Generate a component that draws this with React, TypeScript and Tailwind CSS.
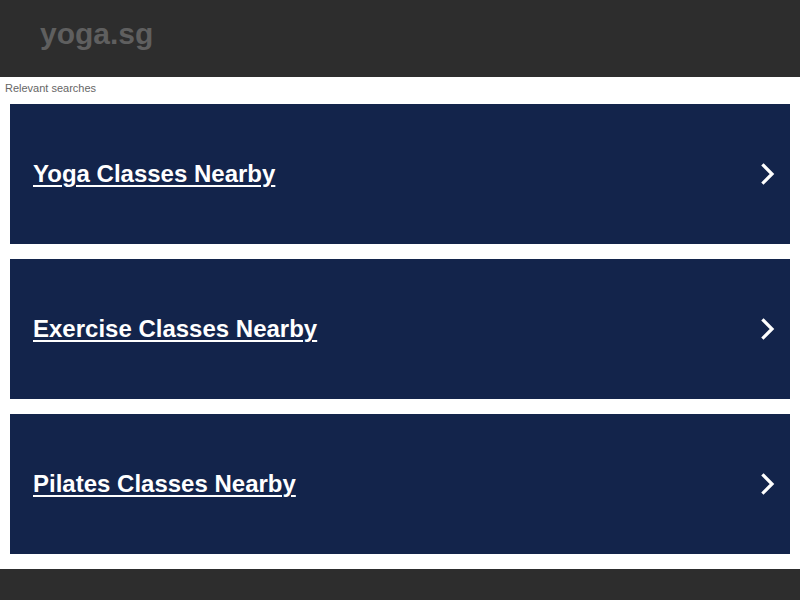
const searches = ["Yoga Classes Nearby", "Exercise Classes Nearby", "Pilates Classes Nearby"];

function Chevron() {
  return (
    <svg width="14" height="22" viewBox="0 0 14 22" className="shrink-0">
      <polyline
        points="2.5,2.5 11,11 2.5,19.5"
        fill="none"
        stroke="#ffffff"
        strokeWidth="3.2"
        strokeLinecap="square"
      />
    </svg>
  );
}

export default function App() {
  return (
    <div className="min-h-[600px] bg-white font-['Liberation_Sans',Arial,sans-serif]">
      {/* Header */}
      <header className="h-[77px] bg-[#2d2d2d] px-10 pt-[17px]">
        <div className="text-[30px] leading-[34px] font-bold text-[#5f5f5f]">yoga.sg</div>
      </header>

      {/* Relevant searches */}
      <div className="h-[27px] px-[5px] pt-[5px] text-[11px] leading-[13px] text-[#666666]">
        Relevant searches
      </div>

      <div className="flex flex-col gap-[15px] px-[10px] pb-[15px]">
        {searches.map((s) => (
          <a
            key={s}
            href="#"
            className="flex h-[140px] items-center justify-between bg-[#13244b] pl-[23px] pr-[15px]"
          >
            <span className="text-[24px] leading-[28px] font-bold text-white underline underline-offset-[3px] decoration-2">
              {s}
            </span>
            <Chevron />
          </a>
        ))}
      </div>

      {/* Footer */}
      <footer className="h-[40px] bg-[#2d2d2d]" />
    </div>
  );
}
